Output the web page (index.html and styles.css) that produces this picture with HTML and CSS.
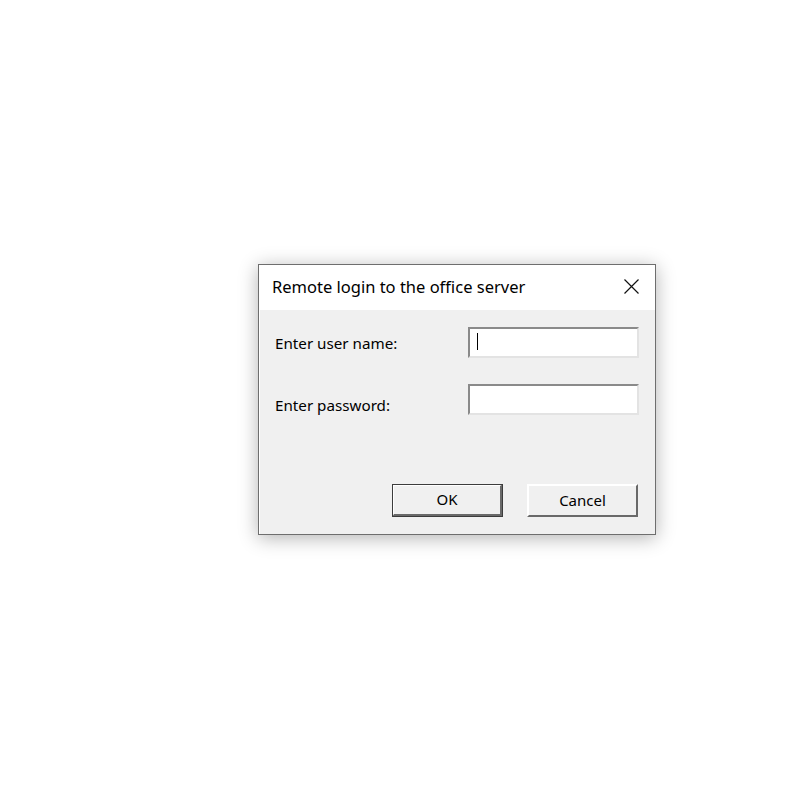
FILE: index.html
```html
<!DOCTYPE html>
<html>
<head>
<meta charset="utf-8">
<link rel="stylesheet" href="styles.css">
</head>
<body>
<div class="dialog">
  <div class="titlebar">
    <span class="title">Remote login to the office server</span>
    <span class="close"><svg width="15" height="15" viewBox="0 0 15 15"><path d="M0.5 0.5 L14.5 14.5 M14.5 0.5 L0.5 14.5" stroke="#111" stroke-width="1.2" fill="none"/></svg></span>
  </div>
  <div class="body">
    <div class="form">
      <label class="label">Enter user name:</label>
      <div class="input"><span class="caret"></span></div>
      <label class="label low">Enter password:</label>
      <div class="input"></div>
    </div>
    <div class="buttons">
      <div class="btn default"><span>OK</span></div>
      <div class="btn"><span>Cancel</span></div>
    </div>
  </div>
</div>
</body>
</html>
```
FILE: styles.css
```css
html, body { margin: 0; padding: 0; background: #fff; }
html { min-height: 800px; }
body { min-height: 800px; padding-top: 264px; box-sizing: border-box; font-family: "Noto Sans", "Open Sans", sans-serif; font-size: 15px; color: #000; }
.dialog {
  margin-left: 258px;
  width: 398px; height: 271px; box-sizing: border-box;
  border: 1px solid #6e6e6e;
  background: #f0f0f0;
  box-shadow: 0 3px 18px rgba(0,0,0,0.3);
  display: flex; flex-direction: column;
}
.titlebar {
  height: 45px; background: #fff; box-sizing: border-box;
  display: flex; align-items: center; justify-content: space-between;
  padding: 0 16px 3px 13px;
}
.title { font-size: 16.5px; }
.close { display: flex; }
.body { flex: 1; display: flex; flex-direction: column; padding: 17px 17px 16px 15px; border-left: 1px solid #fff; }
.form { display: grid; grid-template-columns: 193px 171px; row-gap: 26px; align-items: center; }
.label { font-size: 15.2px; }
.label.low { padding-top: 10px; }
.input {
  height: 31px; box-sizing: border-box; background: #fff;
  border-top: 2px solid #8a8a8a; border-left: 2px solid #8a8a8a;
  border-right: 2px solid #e3e3e3; border-bottom: 2px solid #e3e3e3;
  position: relative;
}
.caret { position: absolute; left: 7px; top: 4px; width: 1px; height: 17px; background: #000; }
.buttons { margin-top: auto; display: flex; justify-content: flex-end; gap: 24px; padding-bottom: 1px; }
.btn {
  width: 111px; height: 33px; box-sizing: border-box;
  border-top: 2px solid #fff; border-left: 2px solid #fff;
  border-right: 2px solid #696969; border-bottom: 2px solid #696969;
  background: #f0f0f0; display: flex; align-items: center; justify-content: center;
  padding-bottom: 2px;
}
.btn.default { outline: 1px solid #3c3c3c; outline-offset: -1px; border-right-width: 3px; border-bottom-width: 3px; }
```
